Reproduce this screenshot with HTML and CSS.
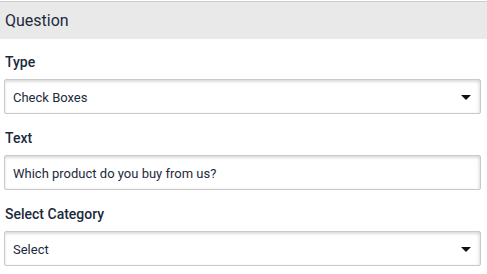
FILE: index.html
```html
<!DOCTYPE html>
<html>
<head>
<meta charset="utf-8">
<link rel="stylesheet" href="styles.css">
</head>
<body>
<div class="panel">
  <div class="panel-header">Question</div>
  <div class="panel-body">
    <div class="field">
      <label class="field-label">Type</label>
      <div class="control select">
        <span class="control-text">Check Boxes</span>
        <span class="caret"></span>
      </div>
    </div>
    <div class="field">
      <label class="field-label">Text</label>
      <div class="control">
        <span class="control-text">Which product do you buy from us?</span>
      </div>
    </div>
    <div class="field">
      <label class="field-label">Select Category</label>
      <div class="control select">
        <span class="control-text">Select</span>
        <span class="caret"></span>
      </div>
    </div>
  </div>
</div>
</body>
</html>
```
FILE: styles.css
```css
html, body {
  margin: 0;
  padding: 0;
  background: #ffffff;
}
body {
  font-family: Roboto, "Liberation Sans", Arial, sans-serif;
  color: #1c2a3d;
}
.panel {
  padding-top: 1px;
}
.panel-header {
  border-top: 1px solid #cdcdcd;
  background: #e9e9e9;
  padding: 9px 5px 9px 5px;
  font-size: 16px;
  line-height: 19px;
  font-weight: 400;
}
.panel-body {
  padding: 15px 6px 0 4px;
  display: flex;
  flex-direction: column;
  gap: 16px;
}
.field {
  display: flex;
  flex-direction: column;
}
.field-label {
  font-size: 14px;
  line-height: 16px;
  font-weight: 500;
  padding-left: 1px;
  margin-bottom: 9px;
}
.control {
  height: 35px;
  box-sizing: border-box;
  border: 1px solid #c9c9c9;
  border-radius: 2px;
  box-shadow: inset 0 2px 3px rgba(0, 0, 0, 0.12), inset -2px 0 3px rgba(0, 0, 0, 0.06);
  display: flex;
  align-items: center;
  padding: 1px 10px 0 8px;
  background: #ffffff;
}
.control-text {
  font-size: 13px;
  flex: 1;
}
.caret {
  width: 0;
  height: 0;
  border-left: 5.5px solid transparent;
  border-right: 5.5px solid transparent;
  border-top: 5px solid #111111;
  margin-right: -1px;
}
```
